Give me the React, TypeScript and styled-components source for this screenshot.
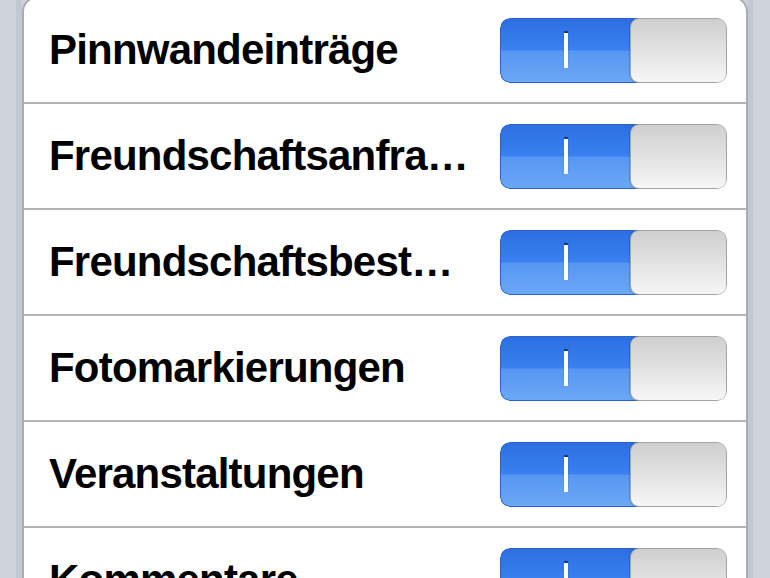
import React from 'react';
import styled, { createGlobalStyle } from 'styled-components';

const GlobalStyle = createGlobalStyle`
  html, body {
    margin: 0;
    padding: 0;
    background: #c7ced6;
    overflow: hidden;
  }
  body {
    font-family: "Liberation Sans", Arial, Helvetica, sans-serif;
  }
`;

const Page = styled.div`
  width: 770px;
  height: 578px;
  overflow: hidden;
  padding: 0 22px;
  box-sizing: border-box;
  background: linear-gradient(
    to right,
    #ccd3db 0,
    #ccd3db 16px,
    #c2c9d1 16px,
    #c2c9d1 22px,
    #ccd3db 22px,
    #ccd3db calc(100% - 22px),
    #c2c9d1 calc(100% - 22px),
    #c2c9d1 calc(100% - 17px),
    #ccd3db calc(100% - 17px)
  );
`;

const Group = styled.div`
  margin-top: -4px;
  background: #fff;
  border: 2px solid #a9abae;
  border-radius: 16px;
  overflow: hidden;
`;

const Row = styled.div`
  display: flex;
  align-items: center;
  height: 104px;
  padding: 0 18px 0 25px;
  border-bottom: 2px solid #b6b6b6;
`;

const Label = styled.div`
  width: 423px;
  margin-right: 28px;
  font-size: 42px;
  font-weight: 700;
  letter-spacing: -0.8px;
  color: #000;
  white-space: nowrap;
  overflow: hidden;
  text-overflow: ellipsis;
  line-height: 50px;
`;

const Track = styled.div`
  display: flex;
  width: 227px;
  height: 65px;
  flex-shrink: 0;
  border-radius: 10px;
  overflow: hidden;
`;

const OnPart = styled.div`
  flex: 0 0 140px;
  margin-right: -10px;
  display: flex;
  align-items: center;
  justify-content: center;
  padding-right: 10px;
  box-sizing: border-box;
  border: 1px solid #2a62c6;
  border-right: none;
  border-radius: 10px 0 0 10px;
  background: linear-gradient(
    to bottom,
    #2c6fe3 0%,
    #3a80f1 49%,
    #5797f2 51%,
    #6aa7f6 100%
  );
`;

const OnMark = styled.div`
  width: 4px;
  height: 35px;
  background: #fff;
  box-shadow: 0 -2px 1px rgba(0, 30, 90, 0.7);
`;

const Thumb = styled.div`
  flex: 0 0 97px;
  position: relative;
  box-sizing: border-box;
  border: 1px solid #a3a3a3;
  border-radius: 9px;
  background: linear-gradient(to bottom, #cfcfcf 0%, #e2e2e2 50%, #f6f6f6 100%);
  box-shadow: -1px 0 1px rgba(0, 0, 0, 0.15);
`;

const items = [
  'Pinnwandeinträge',
  'Freundschaftsanfragen',
  'Freundschaftsbestätigungen',
  'Fotomarkierungen',
  'Veranstaltungen',
  'Kommentare',
];

const Toggle: React.FC = () => (
  <Track>
    <OnPart>
      <OnMark />
    </OnPart>
    <Thumb />
  </Track>
);

const App: React.FC = () => (
  <>
    <GlobalStyle />
    <Page>
      <Group>
        {items.map((item) => (
          <Row key={item}>
            <Label>{item}</Label>
            <Toggle />
          </Row>
        ))}
      </Group>
    </Page>
  </>
);

export default App;
